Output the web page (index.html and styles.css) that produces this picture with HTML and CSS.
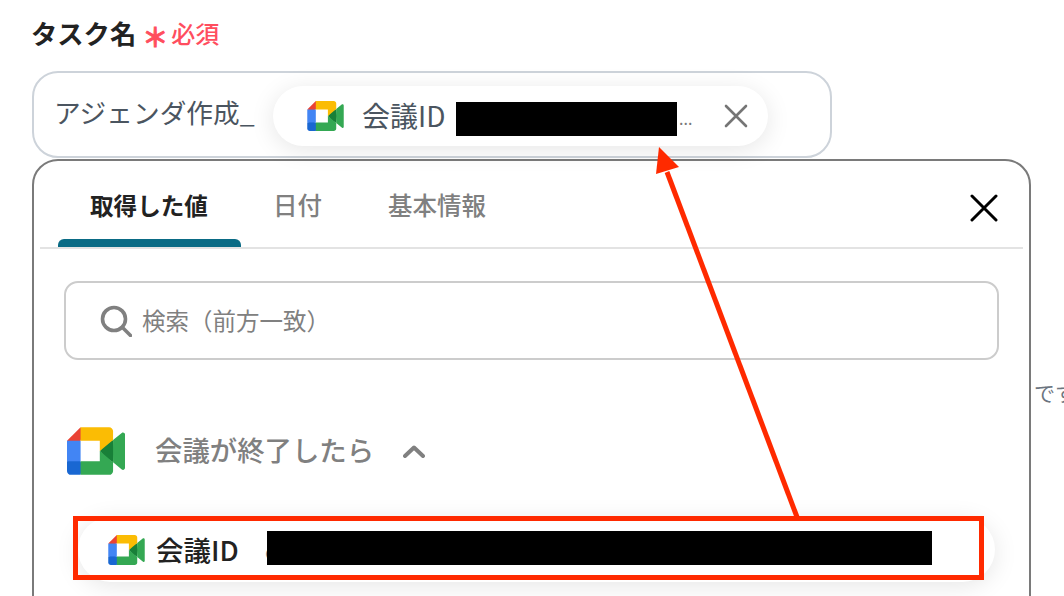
FILE: index.html
```html
<!DOCTYPE html>
<html lang="ja">
<head>
    <meta charset="UTF-8">
    <title>タスク名</title>
    <link rel="stylesheet" href="styles.css">
</head>
<body>
    <svg class="defs" width="0" height="0">
        <symbol id="meet" viewBox="0 0 87.5 72">
            <path fill="#188038" d="M49.5 36l8.53 9.75 11.47 7.33 2-17.02-2-16.64-11.69 6.44z"/>
            <path fill="#1967d2" d="M0 51.5V66c0 3.315 2.685 6 6 6h14.5l3-10.96-3-9.54-9.95-3z"/>
            <path fill="#ea4335" d="M20.5 0L0 20.5l10.55 3 9.95-3 2.95-9.41z"/>
            <path fill="#4285f4" d="M20.5 20.5H0v31h20.5z"/>
            <path fill="#34a853" d="M82.6 8.68L69.5 19.42v33.66l13.16 10.79c1.97 1.54 4.85.135 4.85-2.37V11c0-2.535-2.945-3.925-4.91-2.32zM49.5 36v15.5h-29V72h43c3.315 0 6-2.685 6-6V53.08z"/>
            <path fill="#fbbc04" d="M63.5 0h-43v20.5h29V36l20-16.57V6c0-3.315-2.685-6-6-6z"/>
        </symbol>
    </svg>

    <div class="page">
        <div class="field-label">
            <span class="label-text">タスク名</span>
            <span class="required-mark">＊</span>
            <span class="required-text">必須</span>
        </div>

        <div class="name-input">
            <span class="input-text">アジェンダ作成_</span>
            <div class="chip">
                <svg class="chip-icon"><use href="#meet"/></svg>
                <span class="chip-text">会議ID</span>
                <span class="redact chip-redact"></span>
                <span class="chip-dots">...</span>
                <svg class="chip-close" viewBox="0 0 24 24">
                    <path d="M2 2L22 22M22 2L2 22"/>
                </svg>
            </div>
        </div>

        <div class="panel">
            <div class="tabs">
                <div class="tab active">取得した値</div>
                <div class="tab">日付</div>
                <div class="tab">基本情報</div>
                <svg class="panel-close" viewBox="0 0 28 28">
                    <path d="M2 2L26 26M26 2L2 26"/>
                </svg>
            </div>

            <div class="search-box">
                <svg class="search-icon" viewBox="0 0 32 32">
                    <circle cx="14" cy="14" r="11.5"/>
                    <path d="M22.5 22.5L30.5 30.5"/>
                </svg>
                <span class="search-text">検索（前方一致）</span>
            </div>

            <div class="section-head">
                <svg class="section-icon"><use href="#meet"/></svg>
                <span class="section-title">会議が終了したら</span>
                <svg class="chevron" viewBox="0 0 22 13">
                    <path d="M2 11L11 2.5L20 11"/>
                </svg>
            </div>

            <div class="value-row">
                <svg class="row-icon"><use href="#meet"/></svg>
                <span class="row-name">会議ID</span>
                <span class="row-value">c</span>
                <span class="redact row-redact"></span>
            </div>
        </div>

        <div class="side-text">です</div>
    </div>

    <!-- 注釈 -->
    <div class="note-box"></div>
    <svg class="note-arrow" width="1064" height="596" viewBox="0 0 1064 596">
        <path class="arrow-line" d="M797 517L667 172"/>
        <path class="arrow-head" d="M659 147L679 167L656 174z"/>
    </svg>
</body>
</html>
```

FILE: styles.css
```css
html, body {
    margin: 0;
    height: 596px;
    overflow: hidden;
    background: white;
}

body {
    font-family: "Noto Sans CJK JP", "Noto Sans", sans-serif;
    position: relative;
}

.defs {
    position: absolute;
}

.page {
    height: 596px;
    box-sizing: border-box;
    overflow: hidden;
    padding: 13px 32px 0;
}

.field-label {
    display: flex;
    align-items: center;
    height: 38px;
    margin-bottom: 20px;
}

.label-text {
    font-size: 26.3px;
    font-weight: 700;
    color: #222;
    margin-left: -1px;
}

.required-mark {
    font-size: 26px;
    font-weight: 700;
    margin-left: 6px;
    color: #ff4d5e;
    padding-top: 6px;
    -webkit-text-stroke: 0.8px #ff4d5e;
}

.required-text {
    font-size: 24px;
    font-weight: 500;
    margin-left: 3px;
    color: #ff4d5e;
}

.name-input {
    position: relative;
    box-sizing: border-box;
    width: 800px;
    height: 87px;
    border: 2px solid #cdd3da;
    border-radius: 26px;
    padding: 0 20px;
    display: flex;
    align-items: center;
}

.input-text {
    font-size: 26.7px;
    color: #4b5560;
    padding-bottom: 6px;
}

.chip {
    position: absolute;
    left: 239px;
    top: 13px;
    box-sizing: border-box;
    width: 495px;
    height: 60px;
    border-radius: 30px;
    background: white;
    box-shadow: 0 4px 24px rgba(0,0,0,0.1);
    display: flex;
    align-items: center;
    padding-left: 34px;
}

.chip-icon {
    width: 37px;
    height: 30px;
    flex: none;
}

.chip-text {
    font-size: 28px;
    color: #4b5560;
    margin-left: 18px;
    width: 84px;
    white-space: nowrap;
    padding-bottom: 2px;
}

.redact {
    display: block;
    background: black;
    flex: none;
}

.chip-redact {
    width: 221px;
    height: 34px;
    margin-left: 10px;
    margin-top: 6px;
}

.chip-dots {
    font-size: 16px;
    color: #777;
    width: 20px;
    margin-left: 2px;
    padding-top: 3px;
}

.chip-close {
    width: 24px;
    height: 24px;
    margin-left: 25px;
    fill: none;
    stroke: #757575;
    stroke-width: 2.6;
    stroke-linecap: round;
}

.panel {
    box-sizing: border-box;
    width: 999px;
    height: 520px;
    margin-top: 1px;
    border: 2px solid #7a7a7a;
    border-radius: 26px;
    padding: 0 6px;
    background: white;
}

.tabs {
    position: relative;
    display: flex;
    height: 86px;
    border-bottom: 2px solid #e3e3e3;
    padding-left: 18px;
}

.tab {
    position: relative;
    height: 86px;
    line-height: 88px;
    font-size: 24.5px;
    font-weight: 500;
    color: #808080;
    white-space: nowrap;
    margin-right: 66px;
}

.tab.active {
    font-size: 23.6px;
    font-weight: 700;
    color: #222;
    width: 118px;
    padding: 0 33px 0 32px;
    margin-right: 32px;
}

.tab.active::after {
    content: "";
    position: absolute;
    left: 0;
    right: 0;
    bottom: 0;
    height: 8px;
    background: #0a6b85;
    border-radius: 6px 6px 0 0;
}

.panel-close {
    position: absolute;
    left: 930px;
    top: 33px;
    width: 28px;
    height: 28px;
    fill: none;
    stroke: black;
    stroke-width: 3;
    stroke-linecap: round;
}

.search-box {
    box-sizing: border-box;
    width: 935px;
    height: 79px;
    margin: 32px 0 0 24px;
    border: 2px solid #cccccc;
    border-radius: 14px;
    display: flex;
    align-items: center;
    padding-left: 34px;
}

.search-icon {
    width: 32px;
    height: 32px;
    fill: none;
    stroke: #808080;
    stroke-width: 3.6;
    stroke-linecap: round;
    flex: none;
}

.search-text {
    font-size: 23.5px;
    color: #808080;
    margin-left: 10px;
    padding-bottom: 2px;
}

.section-head {
    display: flex;
    align-items: center;
    margin: 66px 0 0 27px;
    height: 50px;
}

.section-icon {
    width: 58px;
    height: 48px;
    flex: none;
}

.section-title {
    font-size: 27.4px;
    font-weight: 500;
    color: #808080;
    margin-left: 30px;
    white-space: nowrap;
    padding-bottom: 4px;
}

.chevron {
    width: 22px;
    height: 13px;
    margin-left: 29px;
    fill: none;
    stroke: #808080;
    stroke-width: 4;
    stroke-linecap: round;
    stroke-linejoin: round;
}

.value-row {
    box-sizing: border-box;
    width: 917px;
    height: 65px;
    margin: 41px 0 0 38px;
    border-radius: 33px;
    background: white;
    box-shadow: 0 4px 24px rgba(0,0,0,0.1);
    display: flex;
    align-items: center;
    padding-left: 30px;
}

.row-icon {
    width: 37px;
    height: 30px;
    flex: none;
}

.row-name {
    font-size: 27.5px;
    font-weight: 500;
    color: #222;
    margin-left: 11px;
    width: 82px;
    white-space: nowrap;
    padding-bottom: 2px;
}

.row-value {
    font-size: 22px;
    color: #808080;
    margin-left: 27px;
    width: 2px;
    overflow: hidden;
}

.row-redact {
    width: 665px;
    height: 34px;
    margin-bottom: 4px;
}

.side-text {
    position: absolute;
    left: 1034px;
    top: 377px;
    font-size: 21px;
    color: #6b7580;
    white-space: nowrap;
}

.note-box {
    position: absolute;
    left: 73px;
    top: 516px;
    box-sizing: border-box;
    width: 911px;
    height: 64px;
    border: 5px solid #ff2a00;
}

.note-arrow {
    position: absolute;
    left: 0;
    top: 0;
}

.arrow-line {
    fill: none;
    stroke: #ff2a00;
    stroke-width: 5;
}

.arrow-head {
    fill: #ff2a00;
}
```
